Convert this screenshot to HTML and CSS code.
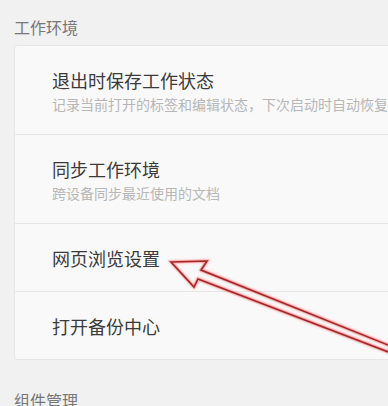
FILE: index.html
```html
<!DOCTYPE html>
<html lang="zh-CN">
<head>
    <meta charset="UTF-8">
    <meta name="viewport" content="width=device-width, initial-scale=1.0">
    <title>设置</title>
    <link rel="stylesheet" href="styles.css">
</head>
<body>
    <div class="page">
        <!-- 工作环境 -->
        <h3 class="section-title">工作环境</h3>
        <div class="card">
            <div class="row">
                <div class="row-title">退出时保存工作状态</div>
                <div class="row-desc">记录当前打开的标签和编辑状态，下次启动时自动恢复</div>
            </div>
            <div class="row">
                <div class="row-title">同步工作环境</div>
                <div class="row-desc">跨设备同步最近使用的文档</div>
            </div>
            <div class="row">
                <div class="row-title">网页浏览设置</div>
            </div>
            <div class="row">
                <div class="row-title">打开备份中心</div>
            </div>
        </div>

        <h3 class="section-title next">组件管理</h3>
    </div>

    <!-- red pointer arrow drawn over the list -->
    <svg class="pointer" width="388" height="406" viewBox="0 0 388 406">
        <defs>
            <filter id="glow" x="-10%" y="-10%" width="120%" height="120%">
                <feGaussianBlur in="SourceGraphic" stdDeviation="1.2" result="blur"/>
                <feMerge>
                    <feMergeNode in="blur"/>
                    <feMergeNode in="SourceGraphic"/>
                </feMerge>
            </filter>
        </defs>
        <polygon points="171,262 207,261 201,270 393,347 391,353 198,279 194,287"
                 fill="none" stroke="#ff6a6a" stroke-width="3" stroke-linejoin="miter" opacity="0.55" filter="url(#glow)"/>
        <polygon points="171,262 207,261 201,270 393,347 391,353 198,279 194,287"
                 fill="none" stroke="#a3262b" stroke-width="1.6" stroke-linejoin="miter"/>
    </svg>
</body>
</html>
```

FILE: styles.css
```css
:root {
    --bg-color: #f1f1f1;
    --card-bg: #f9f9f9;
    --line: #e6e6e6;
    --title: #3b3b3b;
    --desc: #b7b7b7;
    --heading: #777;
}

body {
    font-family: "Microsoft YaHei", "Noto Sans CJK SC", "Noto Sans", sans-serif;
    background-color: var(--bg-color);
    margin: 0;
    padding: 0;
    overflow: hidden;
}

.page {
    width: 460px;
    padding: 16px 0 0 14px;
}

.section-title {
    margin: 0 0 7px;
    font-size: 16px;
    line-height: 22px;
    font-weight: normal;
    color: var(--heading);
}

.section-title.next {
    margin-top: 29px;
}

.card {
    background-color: var(--card-bg);
    border: 1px solid var(--line);
    border-radius: 3px;
}

.row {
    padding: 22px 37px 21px;
    border-top: 1px solid var(--line);
}

.row:first-child {
    border-top: none;
}

.row-title {
    font-size: 18px;
    line-height: 24px;
    color: var(--title);
    white-space: nowrap;
}

.row-desc {
    margin-top: 2px;
    font-size: 14px;
    line-height: 20px;
    color: var(--desc);
    white-space: nowrap;
}

.row:has(.row-desc) {
    padding-bottom: 20px;
}

.pointer {
    position: absolute;
    top: 0;
    left: 0;
    pointer-events: none;
}
```
